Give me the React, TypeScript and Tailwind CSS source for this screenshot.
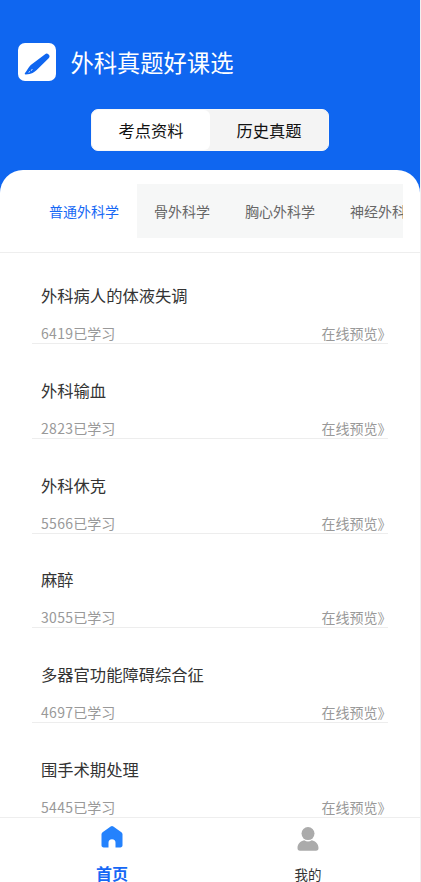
import { useState } from "react";

type Course = {
  id: number;
  title: string;
  learned: number;
};

const modes = ["考点资料", "历史真题"];

const subjects = ["普通外科学", "骨外科学", "胸心外科学", "神经外科学"];

const courses: Course[] = [
  { id: 1, title: "外科病人的体液失调", learned: 6419 },
  { id: 2, title: "外科输血", learned: 2823 },
  { id: 3, title: "外科休克", learned: 5566 },
  { id: 4, title: "麻醉", learned: 3055 },
  { id: 5, title: "多器官功能障碍综合征", learned: 4697 },
  { id: 6, title: "围手术期处理", learned: 5445 },
];

function ScalpelIcon() {
  return (
    <svg viewBox="0 0 38 38" className="h-full w-full" fill="none">
      <path
        d="M27.100 11.200c1.200-1 2.400-.7 3.500.4s1.300 2.200.3 3.300L18.700 26.900c-2.300 2.200-5 4.400-11.100 4.500-.9 0-1.100-.7-.6-1.300 2.300-2.500 3.100-5.600 5.800-8z"
        fill="#0f66f0"
      />
      <path d="M10.600 29.300l1.500-.9M13.200 27.800l1.100-1.800" stroke="#fff" strokeWidth="0.8" />
    </svg>
  );
}

function HomeIcon() {
  return (
    <svg viewBox="0 0 22 22" className="h-[22px] w-[22px] shrink-0">
      <path
        d="M9.700.6a2.200 2.200 0 0 1 2.600 0l8.100 5.700c.7.500 1.100 1.200 1.100 2v11c0 1.300-.9 2.200-2.200 2.200h-4.800v-4.700a3.500 3.500 0 0 0-7 0v4.700H2.700c-1.300 0-2.200-.9-2.200-2.200v-11c0-.8.400-1.500 1.100-2z"
        fill="#2482fd"
      />
    </svg>
  );
}

function UserIcon() {
  return (
    <svg viewBox="0 0 22 24" className="h-6 w-[22px] shrink-0" fill="#ababab">
      <circle cx="11" cy="6.600" r="6.500" />
      <path d="M7.200 13.300a7 7 0 0 0 7.600 0c3.900.7 6.700 3.900 6.700 7.700 0 1.900-.8 2.700-2.500 2.700H3c-1.700 0-2.500-.8-2.500-2.700 0-3.800 2.800-7 6.700-7.700z" />
    </svg>
  );
}

function CourseRow({ course }: { course: Course }) {
  return (
    <li className="flex h-[94.7px] flex-col justify-end border-b border-[#ededed] px-[9px] pb-[0.8px]">
      <h2 className="text-[16.3px] leading-6 text-[#333]">{course.title}</h2>
      <div className="mt-[17px] flex justify-between text-[14px] leading-[18px] text-[#999]">
        <span>
          <span className="tracking-[0.3px]">{course.learned}</span>已学习
        </span>
        <span className="-mr-[12.5px]">在线预览》</span>
      </div>
    </li>
  );
}

export default function App() {
  const [mode, setMode] = useState(0);
  const [subject, setSubject] = useState(0);

  return (
    <div className="h-[882px] w-full overflow-hidden bg-[#f0f0f0] pr-px font-['Noto_Sans_CJK_SC',sans-serif]">
      <div className="flex h-full flex-col bg-[#0f66f0]">
        <header className="h-[170px] shrink-0">
          <div className="flex items-start gap-[14px] pt-[43px] pl-[18.4px]">
            <div className="mt-[0.4px] h-[38px] w-[38px] rounded-[7px] bg-white">
              <ScalpelIcon />
            </div>
            <h1 className="text-[23.3px] leading-[39px] text-white">外科真题好课选</h1>
          </div>
          <div className="mx-auto mt-[27px] flex h-[42px] w-[238px] rounded-[7px] border border-[#f8f8f8] bg-[#f4f4f4]">
            {modes.map((name, index) => (
              <button
                key={name}
                type="button"
                onClick={() => setMode(index)}
                className={`flex-1 rounded-[6px] text-[16.3px] text-[#111] ${
                  mode === index ? "bg-white" : ""
                }`}
              >
                {name}
              </button>
            ))}
          </div>
        </header>

        <main className="flex min-h-0 flex-1 flex-col rounded-t-[23px] bg-white">
          <div className="h-[83px] shrink-0 border-b border-[#eeeeee] pt-[14px] pr-[17px] pl-[31.5px]">
            <div className="flex h-[54px] overflow-hidden bg-[#f6f7f7]">
              {subjects.map((name, index) => (
                <button
                  key={name}
                  type="button"
                  onClick={() => setSubject(index)}
                  className={`shrink-0 px-[17.5px] text-[14px] ${
                    subject === index ? "bg-white text-[#1668f5]" : "text-[#666]"
                  }`}
                >
                  {name}
                </button>
              ))}
            </div>
          </div>
          <div className="min-h-0 flex-1 overflow-hidden px-8">
            <ul className="-mt-[3.5px]">
              {courses.map((course) => (
                <CourseRow key={course.id} course={course} />
              ))}
            </ul>
          </div>
          <nav className="flex h-[65px] shrink-0 border-t border-[#eeeeee] px-[14px] text-center">
            <a className="flex flex-1 flex-col items-center pt-[8px] text-[16px] font-bold text-[#1668f5]">
              <HomeIcon />
              <span className="mt-[17px] leading-4">首页</span>
            </a>
            <a className="flex flex-1 flex-col items-center pt-[9px] text-[13.5px] text-[#333]">
              <UserIcon />
              <span className="mt-[15px] leading-4">我的</span>
            </a>
          </nav>
        </main>
      </div>
    </div>
  );
}
